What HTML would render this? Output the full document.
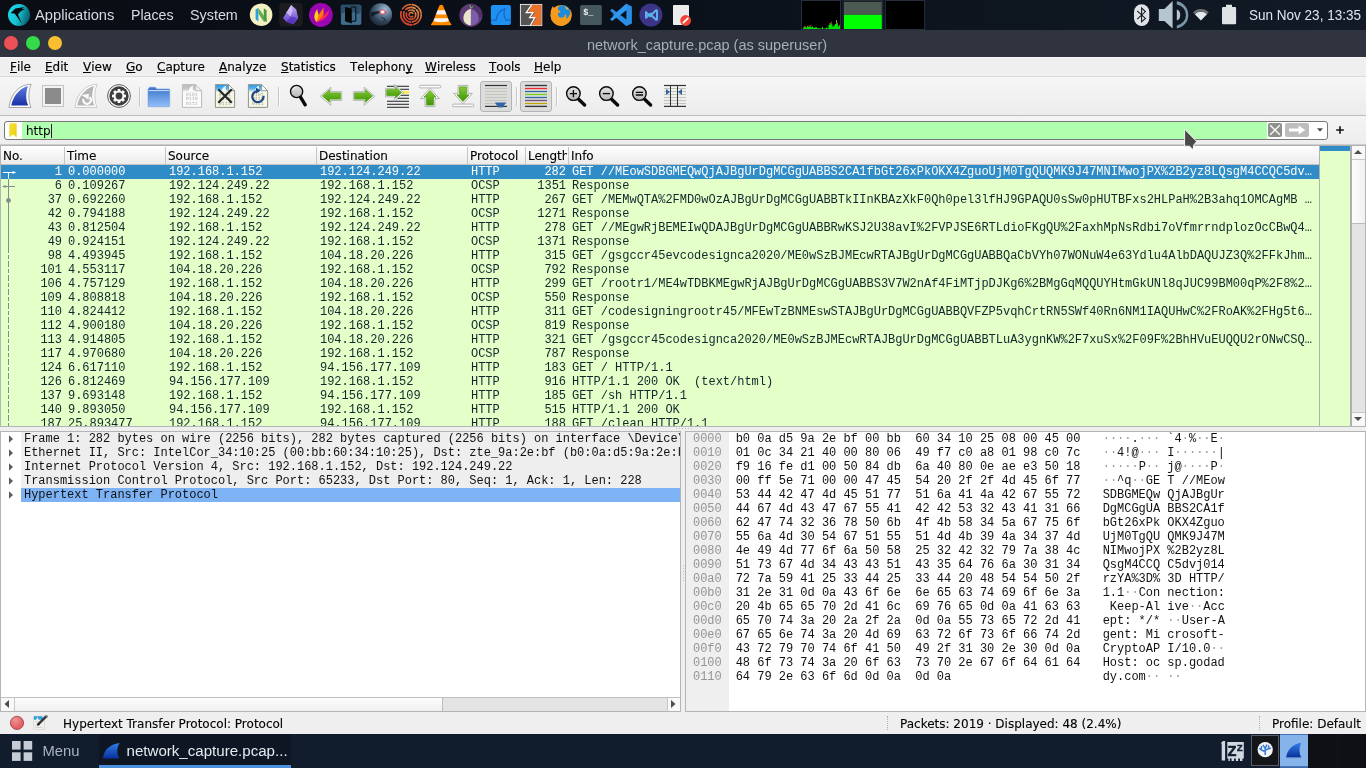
<!DOCTYPE html>
<html lang="en"><head><meta charset="utf-8"><title>network_capture.pcap (as superuser)</title>
<style>
*{box-sizing:border-box;margin:0;padding:0}
html,body{width:1366px;height:768px;overflow:hidden;background:#efefef;font-family:"DejaVu Sans","Liberation Sans",sans-serif;font-size:12px;color:#1a1a1a}
#root{position:absolute;left:0;top:0;width:1366px;height:768px;overflow:hidden;will-change:transform}
.abs{position:absolute}
svg{position:absolute;overflow:visible}
#panel{position:absolute;left:0;top:0;width:1366px;height:30px;background:linear-gradient(90deg,#0a0d14 0%,#0b111a 50%,#111a26 100%);color:#d6dbe3;font-family:"Liberation Sans",sans-serif;font-size:15.5px}
#panel .t{position:absolute;top:5px;line-height:20px;white-space:nowrap;transform-origin:0 50%;transform:scaleX(.95)}
#title{position:absolute;left:0;top:30px;width:1366px;height:27px;background:#2f343f;color:#a5aebb;font-family:"Liberation Sans",sans-serif;font-size:14.5px}
#title .tt{position:absolute;left:0;top:6px;width:1414px;text-align:center;line-height:19px;white-space:nowrap}
.dot{position:absolute;top:6px;width:14px;height:14px;border-radius:50%}
#menubar{position:absolute;left:0;top:57px;width:1366px;height:20px;background:#efefef;border-top:1px solid #f8f8f8;border-bottom:1px solid #dadada;font-size:12px;line-height:19px;color:#000;-webkit-text-stroke:0.15px #000}
#menubar span{position:absolute;top:0;white-space:nowrap;font-kerning:none}
#menubar u{text-decoration:underline;text-underline-offset:1px;text-decoration-skip-ink:none}
#toolbar{position:absolute;left:0;top:77px;width:1366px;height:39px;background:linear-gradient(#f6f6f6,#ececec);border-bottom:1px solid #bdbdbd}
.tsep{position:absolute;top:10px;width:1px;height:19px;background:#c6c6c6;box-shadow:1px 0 0 #fafafa}
.tbtn{position:absolute;top:4px;width:32px;height:31px;border:1px solid #b4b4b4;border-radius:3px;background:#dcdcdc}
#filter{position:absolute;left:0;top:116px;width:1366px;height:29px;background:linear-gradient(#f4f4f4,#ededed)}
#finput{position:absolute;left:4px;top:5px;width:1324px;height:19px;border:1px solid #777;border-radius:3px;background:#fff;overflow:hidden}
#fgreen{position:absolute;left:17px;top:0;width:1245px;height:17px;background:#afffaf;font-size:12px;line-height:17px;padding:1px 0 0 4px;color:#000}
#plist{position:absolute;left:0;top:145px;width:1366px;height:282px;border:1px solid #b4b4b4;border-top-color:#b0b0b0;background:#fff;overflow:hidden;box-shadow:0 -1px 0 #cdcdcd}
#phead{position:absolute;left:0;top:0;width:1318px;height:19px;background:linear-gradient(#ffffff,#ebebeb);border-bottom:1px solid #c9c3c0;font-size:12px;line-height:18px;color:#000;-webkit-text-stroke:0.12px #000}
#phead span{position:absolute;top:1px;height:18px;border-left:1px solid #c4c4c4;padding-left:2px;white-space:nowrap;overflow:hidden}
#prows{position:absolute;left:0;top:19px;width:1318px;height:261px;background:#e4ffc7;overflow:hidden;font-family:"Liberation Mono",monospace;font-size:12px;line-height:14px;color:#12272e}
.r{position:absolute;left:0;width:1318px;height:14px;white-space:pre;letter-spacing:-0.018px}
.r span{position:absolute;top:0;height:14px;overflow:hidden;white-space:pre}
.r.sel{background:#308cc6;color:#fff}
.c0{left:21px;width:40px;text-align:right}
.c1{left:67px;width:96px}
.c2{left:168px;width:146px}
.c3{left:319px;width:146px}
.c4{left:470px;width:54px}
.c5{left:525px;width:40px;text-align:right}
.c6{left:571px;width:745px}
#mini{position:absolute;left:1318px;top:0;width:33px;height:280px;border-left:1px solid #b0b0b0;border-right:2px solid #b0b0b0;background:#e4ffc7}
#vsb{position:absolute;left:1351px;top:0;width:13px;height:280px;background:#e4e4e4}
#dpane{position:absolute;left:0;top:431px;width:681px;height:281px;border:1px solid #b4b4b4;background:#fff;overflow:hidden;font-family:"Liberation Mono",monospace;font-size:12px;line-height:14px;color:#111}
.d{position:absolute;left:0;width:679px;height:14px;white-space:pre;letter-spacing:-0.018px}
.d span{position:absolute;left:20px;top:0;padding-left:3px;height:14px;width:659px;overflow:hidden;background:#eee}
.d.dsel span{background:#7db3f4}
.tri{left:7px;top:3px}
#hsb{position:absolute;left:0;top:265px;width:679px;height:14px;border-top:1px solid #c0c0c0;background:#e4e4e4}
#hpane{position:absolute;left:685px;top:431px;width:681px;height:281px;border:1px solid #b4b4b4;background:#fff;overflow:hidden;font-family:"Liberation Mono",monospace;font-size:12px;line-height:14px;color:#111}
#hgut{position:absolute;left:0;top:0;width:43px;height:279px;background:#efefef}
.h{position:absolute;left:0;width:678px;height:14px;white-space:pre;letter-spacing:-0.018px}
.h span{position:absolute;top:0;white-space:pre}
.ho{left:7px;color:#959595}
.hb{left:49.7px}
.ha{left:416.7px}
.ha i{font-style:normal;color:#9a9a9a}
#status{position:absolute;left:0;top:712px;width:1366px;height:22px;background:#efefef;font-size:12px;line-height:22px;color:#000;-webkit-text-stroke:0.12px #000}
#status span{position:absolute;top:1px;white-space:nowrap}
#taskbar{position:absolute;left:0;top:734px;width:1366px;height:34px;background:#111d2c;color:#dfe3ea;font-family:"Liberation Sans",sans-serif;font-size:14.5px}
#taskbar span{position:absolute;top:8px;line-height:18px;white-space:nowrap}
</style></head><body><div id="root">
<div id="panel">
<span class="t" style="left:35px">Applications</span>
<span class="t" style="left:131px;transform:scaleX(.915)">Places</span>
<span class="t" style="left:190px;transform:scaleX(.925)">System</span>
<span class="t" style="left:1249px;color:#dfe6f0;transform:scaleX(.872)">Sun Nov 23, 13:35</span>
<svg style="left:0;top:0" width="1366" height="30" viewBox="0 0 1366 30">
<defs>
<linearGradient id="pg1" x1="0" y1="0" x2="1" y2="0.3"><stop offset="0" stop-color="#1fdcea"/><stop offset="0.55" stop-color="#16c4d4"/><stop offset="1" stop-color="#086a78"/></linearGradient>
<radialGradient id="pg2" cx="0.68" cy="0.28" r="0.95"><stop offset="0" stop-color="#a4c0d8"/><stop offset="0.3" stop-color="#5f7a94"/><stop offset="0.62" stop-color="#2c3e50"/><stop offset="1" stop-color="#10171f"/></radialGradient><radialGradient id="pgeye" cx="0.5" cy="0.5" r="0.5"><stop offset="0" stop-color="#ffffff"/><stop offset="0.3" stop-color="#ffe4e8"/><stop offset="0.6" stop-color="#f06a80" stop-opacity="0.8"/><stop offset="1" stop-color="#e03050" stop-opacity="0"/></radialGradient>
<linearGradient id="pg3" x1="0" y1="1" x2="1" y2="0"><stop offset="0" stop-color="#cc382c"/><stop offset="0.55" stop-color="#d85a30"/><stop offset="1" stop-color="#e8a24e"/></linearGradient>
<linearGradient id="pg4" x1="0" y1="0" x2="0" y2="1"><stop offset="0" stop-color="#c4b0f8"/><stop offset="1" stop-color="#5a38c4"/></linearGradient>
<linearGradient id="pg5" x1="0" y1="0" x2="0" y2="1"><stop offset="0" stop-color="#2f7fe8"/><stop offset="1" stop-color="#0a2f9a"/></linearGradient>
</defs>
<!-- parrot logo -->
<circle cx="19" cy="15" r="11" fill="url(#pg1)"/>
<path d="M10.6 13.2 L15.4 8.6 L24.6 7 L21.6 8.8 L25 9 L20.4 11.4 L18 14.6 L21.8 23.4 L14.6 13.4 Z" fill="#05080c"/>
<!-- neovim -->
<circle cx="261.1" cy="14.7" r="11.3" fill="#f4f0c4"/>
<path d="M255.6 9.6 L258.4 8 L258.4 21.6 L255.6 19.2 Z" fill="#2f9fe0"/>
<path d="M258.4 8 L266.6 19.4 L266.6 21.8 L263.8 21.8 L258.4 13.4 Z" fill="#5fae52"/>
<path d="M263.8 8.2 L266.6 10.2 L266.6 21.8 L263.8 19.2 Z" fill="#4a9a3e"/>
<!-- obsidian -->
<rect x="279.2" y="2.9" width="23.6" height="23.7" rx="4" fill="#1c1c1f"/>
<path d="M291.2 5 L296.2 9.4 L298.2 18 L293.4 24.4 L286.6 22 L283 18.2 L286.4 12.4 Z" fill="url(#pg4)"/>
<path d="M291.2 5 L292.6 10.6 L290.6 16.4 L286.4 12.4 Z" fill="#d8c8fc" opacity="0.75"/>
<path d="M290.6 16.4 L296.8 17.6 L293.4 24.4 L286.6 22 Z" fill="#4c2ab4" opacity="0.6"/>
<!-- flameshot -->
<circle cx="320.9" cy="15" r="11.9" fill="#9a07b2"/>
<path d="M317 22 C312.6 18.6 314.4 13 317.4 9 C317.2 12.4 319 13.4 318.8 17 Z" fill="#ffd21a"/>
<path d="M317 22 C317.4 17 319.4 12.6 323.8 7.6 C323 11.4 324.4 13 323 16.4 C321 19.4 319 21 317 22 Z" fill="#ff7a0a"/>
<path d="M317 22 C320.6 18.4 325 14.6 329.2 10 C328.6 15.6 324.6 20.6 317 22 Z" fill="#ff2060"/>
<!-- door -->
<rect x="340.3" y="4.2" width="21.6" height="21.2" rx="2.4" fill="#3f6c8c" stroke="#05080c" stroke-width="0.9"/>
<path d="M340.8 6 Q340.8 4.7 342.4 4.7 L359.8 4.7 Q361.4 4.7 361.4 6 L361.4 11.6 L358 14.4 L354 12 L349 14.6 L344.4 12 L340.8 14 Z" fill="#2a4d68"/>
<path d="M345 7 L351.8 8.6 L351.8 23.4 L345 21.2 Z" fill="#040608"/>
<path d="M350.6 7 L355.8 7 L355.8 21.2 L352 21.2" fill="none" stroke="#040608" stroke-width="1"/>
<!-- robot sphere -->
<circle cx="380.800" cy="14.500" r="11.300" fill="url(#pg2)"/>
<path d="M371 12.600 C375 11 381 10.600 386 11.400 L386 13 C381 12.400 375.600 13.600 372 17 C370.800 15.600 370.600 14 371 12.600 Z" fill="#0e141c" opacity="0.8"/>
<ellipse cx="382.600" cy="12" rx="4.400" ry="3.200" fill="url(#pgeye)"/>
<path d="M381.200 17.400 L385.200 19 L383.400 22.400 M386 21 L387 21.200" fill="none" stroke="#141c26" stroke-width="0.900" opacity="0.85"/>
<!-- fingerprint rings -->
<g fill="none" stroke="url(#pg3)" stroke-linecap="round">
<circle cx="411" cy="14.7" r="10.2" stroke-width="1.7" stroke-dasharray="13 2 20 3 9 2"/>
<circle cx="411" cy="14.7" r="7.4" stroke-width="1.7" stroke-dasharray="10 2 14 3"/>
<circle cx="411" cy="14.7" r="4.7" stroke-width="1.7" stroke-dasharray="16 3 6 2"/>
<path d="M412.8 13.2 A2.2 2.2 0 1 0 412.8 16.2" stroke-width="1.5"/>
</g>
<!-- vlc -->
<path d="M439.4 5.6 Q441.2 4 443 5.6 L449.2 21 L451.4 24.4 Q451.6 25.2 450.6 25.2 L431.8 25.2 Q430.8 25.2 431 24.4 L433.2 21 Z" fill="#ff8a00"/>
<path d="M437.6 10.2 L444.8 10.2 L446.4 14.4 L436 14.4 Z" fill="#f4f4f4"/>
<path d="M434.6 18.2 L447.8 18.2 L448.8 21 C445 22.6 437.4 22.6 433.6 21 Z" fill="#f4f4f4"/>
<!-- tor -->
<circle cx="470.9" cy="15.2" r="11.5" fill="#5d3a78"/>
<path d="M470.9 3.7 A11.5 11.5 0 0 1 482.4 15.2 L478 21 L471 9 Z" fill="#4e2d66" opacity="0.7"/>
<path d="M470.9 8.4 C476.4 10.6 478.8 14 478.8 18 C478.8 22.4 475.6 25 470.9 25.4 Z" fill="#7e5da8"/>
<path d="M470.9 8.4 C465.4 10.6 463.4 14 463.4 18 C463.4 22.4 466.4 25 470.9 25.4 Z" fill="#e9e6cc"/>
<path d="M470.4 8.6 C470.2 6.6 469.6 5.6 468.8 4.6 C470.6 5 471.4 6.6 471.2 8.6 Z" fill="#6fbf4a"/>
<path d="M471 8.2 C471.4 6.8 472.2 6.2 473.4 6 C473 7.2 472.2 8 471 8.2 Z" fill="#6fbf4a"/>
<!-- wireshark -->
<rect x="490.9" y="5" width="20" height="20" rx="2" fill="#1e90f2"/>
<path d="M491 20.2 H496.2 C496.6 14.4 499.6 10.2 505 8.8 C503.4 12.6 503.8 16.6 506 20.2 H510.8" fill="none" stroke="#1668c4" stroke-width="1.2"/>
<!-- burp -->
<rect x="520.4" y="4.4" width="21.4" height="21.2" fill="#555555" stroke="#f2f2f2" stroke-width="0.9"/>
<path d="M531.6 4.8 H541.4 V25.2 H531.4 L536.4 17.6 H531 L535 12.6 H528.4 Z" fill="#e8722a"/>
<path d="M531.6 4.8 L526.2 12.6 L533 12.6 L529.6 17.6 L534.8 17.6 L530.4 25.2" fill="none" stroke="#ffffff" stroke-width="1.2"/>
<!-- firefox -->
<circle cx="561.100" cy="15.400" r="10.500" fill="#f59a1c"/>
<circle cx="563" cy="12.600" r="7.300" fill="#1c8bdc"/>
<path d="M550.700 12 C551 9 552 7.400 553.200 6 C553.400 7.400 554 8.200 555 8.600 C555.800 7 557.400 6.200 559 6.200 C557.800 7.400 557.600 8.800 558.200 10 C559.400 10.400 560.400 11.400 560.600 12.600 C559 12.400 558 13 557.800 14.200 C558 16.600 560 18 562.200 17.600 C564.400 17.200 565.400 15.200 564.600 13.400 C566.400 14.400 567 17 565.800 19 C568 18.400 569.600 16.400 570 13.800 C570.800 11.800 570.600 10 569.800 8.400 C571.600 10.400 572 13.600 571.400 16.600 C570.200 22.200 565.800 26 560.800 25.900 C555 25.700 550.400 20.800 550.600 14.800 Z" fill="#f59a1c"/>
<path d="M564 6 C566.400 6.600 568.200 8 569 10 C568 9.400 567 9.200 566.200 9.400 C566 8 565.200 6.800 564 6 Z" fill="#f8b030"/>
<!-- terminal -->
<rect x="580.1" y="5" width="21.7" height="20" rx="1.6" fill="#47575f"/>
<text x="583.2" y="14.600" font-family="Liberation Mono,monospace" font-weight="bold" font-size="8.5" fill="#f2f4f5">$_</text>
<!-- vscode -->
<path d="M626.400 3.800 L631.900 6.400 L631.900 23.400 L626.400 25.900 L612.800 14.900 Z" fill="#2a8ee6"/>
<path d="M626.400 3.800 L626.400 25.900 L610.200 10.400 L612.400 8.800 L626.400 19.400 Z" fill="#3aa2f6" opacity="0.001"/>
<path d="M610 10.600 L612.200 8.800 L626.400 20.200 L626.400 25.900 Z" fill="#2a8ee6"/>
<path d="M610 19.200 L612.200 21 L626.400 9.600 L626.400 3.800 Z" fill="#2f98f0"/>
<path d="M626.400 10.200 L620.400 14.900 L626.400 19.600 Z" fill="#0b111a"/>
<!-- vs purple -->
<circle cx="650.900" cy="15" r="11.500" fill="#3b3487"/>
<path d="M656 9 L658 10 L658 20 L656 21 L649.400 15 Z M656 11.800 L652.600 15 L656 18.200 Z" fill="#5cb2ea" fill-rule="evenodd"/>
<path d="M645 11.600 L646.200 11 L651.800 16.400 L650.400 17.600 L647 14.600 L647 15.400 L650.400 12.400 L651.800 13.600 L646.200 19 L645 18.400 Z" fill="#5cb2ea"/>
<!-- doc with badge -->
<rect x="673" y="5" width="16" height="20" rx="0.800" fill="#ebebeb"/>
<circle cx="685.600" cy="20.500" r="5.400" fill="#f1453a"/>
<path d="M683.400 22.600 L687.800 18.400" stroke="#fff" stroke-width="1.700" stroke-linecap="round"/>
<!-- system monitor graphs -->
<rect x="801.500" y="0.500" width="39" height="29" fill="#000" stroke="#262d3c" stroke-width="1"/>
<path d="M803 29 V27.400 H804 V26.600 H805.500 V27.600 H807 V26 H808 V27 H809.500 V25.600 H810.500 V27.200 H812 V26.400 H813 V27.800 H815 V27.200 H817 V28.200 H820 V28.600 H822 V26.800 H823 V28.400 H826 V27.400 H827 V28.200 H828.500 V25 H829.500 V23.600 H830.500 V22.400 H831.500 V24.400 H832.500 V26.800 H833.500 V25.600 H835 V24 H836 V20.400 H837 V23.200 H838 V26.400 H839 V25 H840 V29 Z" fill="#00e400"/>
<path d="M804 26.600 H805.500 M808 26 H808.800 M810.500 25.600 H811.400 M829.500 23.600 H830.500 M831 22.400 H831.800 M836 22.600 H837.400 M838.600 25.200 H839.600" stroke="#ff2020" stroke-width="1.100"/>
<path d="M836.500 20.400 V22" stroke="#b8b8c8" stroke-width="0.900"/>
<rect x="843.200" y="0.500" width="39.400" height="29" fill="#000" stroke="#262d3c" stroke-width="1"/>
<rect x="844" y="1.600" width="37.800" height="13.200" fill="#4b5a52"/>
<rect x="844" y="14.800" width="37.800" height="14.200" fill="#00ff00"/>
<rect x="885.400" y="0.500" width="39.200" height="29" fill="#000" stroke="#262d3c" stroke-width="1"/>
<!-- bluetooth -->
<rect x="1134" y="4.300" width="15.300" height="21.600" rx="7.600" fill="#dfe3e6"/>
<path d="M1137.200 10.800 L1145.400 18.400 L1141.600 21.800 L1141.600 8 L1145.400 11.600 L1137.200 19.200" fill="none" stroke="#161b24" stroke-width="1.100"/>
<!-- speaker -->
<path d="M1158.800 9 H1164.400 L1172.600 1 V28.600 L1164.400 21 H1158.800 Z" fill="#b6c6ce"/>
<path d="M1176.800 9.600 A4.200 5.600 0 0 1 1176.800 20.600 Z" fill="#b6c6ce"/>
<path d="M1176.800 1.200 A13.900 13.900 0 0 1 1176.800 28.600 L1176.800 25.400 A10.600 10.600 0 0 0 1176.800 4.400 Z" fill="#7896a6"/>
<!-- wifi -->
<path d="M1193 12.400 A11 11 0 0 1 1208.800 12.400 L1207.200 14 A9 9 0 0 0 1194.600 14 Z" fill="#6d7178"/>
<path d="M1194.800 14.200 A8.800 8.800 0 0 1 1207 14.200 L1200.900 20.600 Z" fill="#e6e9ec"/>
<!-- battery -->
<path d="M1226 4.800 H1232 V6.900 H1235 Q1236.100 6.900 1236.100 8 V23.200 Q1236.100 24.300 1235 24.300 H1223.100 Q1222 24.300 1222 23.200 V8 Q1222 6.900 1223.100 6.900 H1226 Z" fill="#dfe3e6"/>
</svg>

</div>
<div id="title"><div class="tt">network_capture.pcap (as superuser)</div>
<div class="dot" style="left:4px;background:#ee5058"></div>
<div class="dot" style="left:26px;background:#35dc4a"></div>
<div class="dot" style="left:48px;background:#f9be2f"></div>
</div>
<div id="menubar">
<span style="left:10px"><u>F</u>ile</span>
<span style="left:45px"><u>E</u>dit</span>
<span style="left:83px"><u>V</u>iew</span>
<span style="left:126px"><u>G</u>o</span>
<span style="left:157px"><u>C</u>apture</span>
<span style="left:219px"><u>A</u>nalyze</span>
<span style="left:281px"><u>S</u>tatistics</span>
<span style="left:350px">Telephon<u>y</u></span>
<span style="left:425px"><u>W</u>ireless</span>
<span style="left:489px"><u>T</u>ools</span>
<span style="left:534px"><u>H</u>elp</span>
</div>
<div id="toolbar">
<div class="tsep" style="left:139px"></div>
<div class="tsep" style="left:278px"></div>
<div class="tsep" style="left:516px"></div>
<div class="tsep" style="left:556px"></div>
<div class="tbtn" style="left:480px"></div>
<div class="tbtn" style="left:520px"></div>
<svg width="0" height="0"><defs>
<linearGradient id="gfin" x1="0" y1="0" x2="0" y2="1"><stop offset="0" stop-color="#5b7de0"/><stop offset="1" stop-color="#1b2fa4"/></linearGradient>
<linearGradient id="gfold" x1="0" y1="0" x2="0" y2="1"><stop offset="0" stop-color="#3873c6"/><stop offset="1" stop-color="#93bffa"/></linearGradient>
<linearGradient id="ggrn" x1="0" y1="0" x2="0" y2="1"><stop offset="0" stop-color="#86cf38"/><stop offset="0.5" stop-color="#5fae1c"/><stop offset="1" stop-color="#43920a"/></linearGradient>
<linearGradient id="ggrnh" x1="0" y1="0" x2="1" y2="0"><stop offset="0" stop-color="#4d9d14"/><stop offset="1" stop-color="#79bd36"/></linearGradient>
<linearGradient id="glens" x1="0" y1="0" x2="0" y2="1"><stop offset="0" stop-color="#e2e2e2"/><stop offset="1" stop-color="#b9b9b9"/></linearGradient>
<linearGradient id="ghdr" x1="0" y1="0" x2="1" y2="0"><stop offset="0" stop-color="#5db4f0"/><stop offset="1" stop-color="#1f8fe0"/></linearGradient>
<linearGradient id="gband" x1="0" y1="0" x2="0" y2="1"><stop offset="0" stop-color="#2f9ae6"/><stop offset="0.55" stop-color="#5db4ee"/><stop offset="1" stop-color="#f4f6ec"/></linearGradient><linearGradient id="gbandg" x1="0" y1="0" x2="0" y2="1"><stop offset="0" stop-color="#bcbcbc"/><stop offset="0.6" stop-color="#cacaca"/><stop offset="1" stop-color="#fbfbfb"/></linearGradient></defs></svg>
<!-- 1 start fin -->
<svg style="left:8px;top:7px" width="24" height="24" viewBox="0 0 24 24"><path d="M1 23.500 C1.800 14 8 2.500 19.500 0.500 L23.100 0.300 C20.200 7.500 20.200 16 22.900 23.500 Z" fill="#fdfdfd" stroke="#909090" stroke-width="0.800" stroke-linejoin="round"/><path d="M3.300 21.600 C4.600 13.500 10.500 4.600 20 2 C17.600 8.400 17.600 15.600 20.200 21.600 Z" fill="url(#gfin)"/></svg>
<!-- 2 stop -->
<svg style="left:41px;top:7px" width="24" height="24" viewBox="0 0 24 24"><rect x="1.5" y="1.5" width="21" height="21" fill="#f3f3f3" stroke="#c3c3c3" stroke-width="1"/><rect x="4" y="4" width="16" height="16" fill="#8b8b8b"/></svg>
<!-- 3 restart fin (disabled) -->
<svg style="left:74px;top:7px" width="24" height="24" viewBox="0 0 24 24"><path d="M1 23.500 C1.800 14 8 2.500 19.500 0.500 L23.100 0.300 C20.200 7.500 20.200 16 22.900 23.500 Z" fill="#fafafa" stroke="#c2c2c2" stroke-width="0.800" stroke-linejoin="round"/><path d="M3.300 21.600 C4.600 13.500 10.500 4.600 20 2 C17.600 8.400 17.600 15.600 20.200 21.600 Z" fill="#b4b4b4"/><path d="M15.54 13.09 A3.8 3.8 0 1 1 9.43 15.02" fill="none" stroke="#fafafa" stroke-width="2.200"/><path d="M7.400 10.900 L14.900 9.800 L14.500 15.800 Z" fill="#fafafa"/></svg>
<!-- 4 options gear -->
<svg style="left:107px;top:7px" width="24" height="24" viewBox="0 0 24 24"><circle cx="12" cy="12" r="11.400" fill="#fafafa" stroke="#4a4a4a" stroke-width="0.900"/><circle cx="12" cy="12" r="9.700" fill="#3d3d3d"/><g fill="#fafafa"><circle cx="12" cy="12" r="5.300"/><rect x="10.500" y="5" width="3" height="14" rx="0.700" transform="rotate(0 12 12)"/><rect x="10.500" y="5" width="3" height="14" rx="0.700" transform="rotate(45 12 12)"/><rect x="10.500" y="5" width="3" height="14" rx="0.700" transform="rotate(90 12 12)"/><rect x="10.500" y="5" width="3" height="14" rx="0.700" transform="rotate(135 12 12)"/></g><circle cx="12" cy="12" r="3.400" fill="#3d3d3d"/></svg>
<!-- 5 open folder -->
<svg style="left:147px;top:7px" width="24" height="24" viewBox="0 0 24 24"><path d="M1 5.200 L2.600 3.200 L8.400 3.200 L9.600 5 L22 5 Q22.700 5 22.700 5.600 L22.700 22 Q22.700 22.700 22 22.700 L1.800 22.700 Q1 22.700 1 22 Z" fill="url(#gfold)" stroke="#6fa0e8" stroke-width="0.600"/><rect x="1.600" y="6.200" width="20.600" height="0.900" fill="#dfeaf9"/></svg>
<!-- 6 save (disabled) -->
<svg style="left:180px;top:7px" width="24" height="24" viewBox="0 0 24 24"><path d="M2.400 0.600 L15.600 0.600 L21.600 6.600 L21.600 23.400 L2.400 23.400 Z" fill="#fbfbfb" stroke="#b3b3b3" stroke-width="0.900"/><path d="M2.900 1.100 L15.400 1.100 L21.100 6.800 L21.100 8 L2.900 8 Z" fill="url(#gbandg)"/><path d="M8.600 7.400 C8.800 4.800 10.400 2.600 13.400 1.500 C12.300 3.400 12.400 5.400 13.800 7.400 Z" fill="#fbfbfb"/><path d="M15.600 0.600 L15.600 6.600 L21.600 6.600 Z" fill="#efefef" stroke="#b3b3b3" stroke-width="0.700" stroke-linejoin="round"/><g text-rendering="geometricPrecision" font-family="Liberation Mono,monospace" font-size="5" fill="#b0b0b0"><text x="5.700" y="12">0101</text><text x="5.700" y="16.300">0110</text><text x="5.700" y="21">0111</text></g></svg>
<!-- 7 close file -->
<svg style="left:213px;top:7px" width="24" height="24" viewBox="0 0 24 24"><path d="M2.400 0.600 L15.600 0.600 L21.600 6.600 L21.600 23.400 L2.400 23.400 Z" fill="#f7f7e6" stroke="#85857c" stroke-width="0.900"/><path d="M2.900 1.100 L15.400 1.100 L21.100 6.800 L21.100 8 L2.900 8 Z" fill="url(#gband)"/><path d="M8.600 7.400 C8.800 4.800 10.400 2.600 13.400 1.500 C12.300 3.400 12.400 5.400 13.800 7.400 Z" fill="#fbfcf6"/><path d="M15.600 0.600 L15.600 6.600 L21.600 6.600 Z" fill="#fcfcf4" stroke="#85857c" stroke-width="0.700" stroke-linejoin="round"/><g text-rendering="geometricPrecision" font-family="Liberation Mono,monospace" font-size="5" fill="#a4a492"><text x="5.700" y="12">0101</text><text x="5.700" y="16.300">0110</text><text x="5.700" y="21">0111</text></g><path d="M5.300 5.300 L18.800 18.700 M18.800 5.300 L5.300 18.700" stroke="#22262a" stroke-width="2.200"/></svg>
<!-- 8 reload -->
<svg style="left:246px;top:7px" width="24" height="24" viewBox="0 0 24 24"><path d="M2.400 0.600 L15.600 0.600 L21.600 6.600 L21.600 23.400 L2.400 23.400 Z" fill="#f7f7e6" stroke="#85857c" stroke-width="0.900"/><path d="M2.900 1.100 L15.400 1.100 L21.100 6.800 L21.100 8 L2.900 8 Z" fill="url(#gband)"/><path d="M8.600 7.400 C8.800 4.800 10.400 2.600 13.400 1.500 C12.300 3.400 12.400 5.400 13.800 7.400 Z" fill="#fbfcf6"/><path d="M15.600 0.600 L15.600 6.600 L21.600 6.600 Z" fill="#fcfcf4" stroke="#85857c" stroke-width="0.700" stroke-linejoin="round"/><g text-rendering="geometricPrecision" font-family="Liberation Mono,monospace" font-size="5" fill="#a4a492"><text x="5.700" y="12">0101</text><text x="5.700" y="16.300">0110</text><text x="5.700" y="21">0111</text></g><path d="M10.93 7.09 A5.6 5.6 0 1 0 17.45 11.82" fill="none" stroke="#1d4486" stroke-width="2.200"/><path d="M14.600 6.500 L9.800 3.600 L10.300 9.600 Z" fill="#1d4486"/></svg>
<!-- 9 find -->
<svg style="left:286px;top:7px" width="24" height="24" viewBox="0 0 24 24"><path d="M14.2 12.6 L19.2 20.8" stroke="#0a0a0a" stroke-width="3.4" stroke-linecap="round"/><circle cx="10.6" cy="7.5" r="6.1" fill="url(#glens)" stroke="#0a0a0a" stroke-width="1.4"/><path d="M6.6 6.2 A4.4 4.4 0 0 1 10 3.2" fill="none" stroke="#f7f7f7" stroke-width="0.9"/></svg>
<!-- 10 back -->
<svg style="left:319px;top:7px" width="24" height="24" viewBox="0 0 24 24"><path d="M1.400 12 L11.800 3.200 L11.800 7.600 L22.600 7.600 L22.600 16.400 L11.800 16.400 L11.800 20.800 Z" fill="#fdfdfd" stroke="#a5a5a5" stroke-width="0.800" stroke-linejoin="round" stroke-linecap="round"/><path d="M3.400 12 L10.600 5.800 L10.600 8.900 L21.300 8.900 L21.300 15.100 L10.600 15.100 L10.600 18.200 Z" fill="url(#ggrn)" stroke="#58a51e" stroke-width="0.9" stroke-linejoin="round"/></svg>
<!-- 11 forward -->
<svg style="left:352px;top:7px" width="24" height="24" viewBox="0 0 24 24"><path d="M22.600 12 L12.200 3.200 L12.200 7.600 L1.400 7.600 L1.400 16.400 L12.200 16.400 L12.200 20.800 Z" fill="#fdfdfd" stroke="#a5a5a5" stroke-width="0.800" stroke-linejoin="round" stroke-linecap="round"/><path d="M20.600 12 L13.400 5.800 L13.400 8.900 L2.700 8.900 L2.700 15.100 L13.400 15.100 L13.400 18.200 Z" fill="url(#ggrn)" stroke="#58a51e" stroke-width="0.9" stroke-linejoin="round"/></svg>
<!-- 12 goto -->
<svg style="left:385px;top:7px" width="24" height="24" viewBox="0 0 24 24"><g stroke="#2e3436" stroke-width="1.100"><path d="M2 2.300 H24"/><path d="M15 11.300 H24"/><path d="M12 14.300 H24"/><path d="M2 17.300 H24"/><path d="M2 20.300 H24"/><path d="M2 23.300 H24"/><path d="M15 5.300 H24"/></g><rect x="17.500" y="7" width="6.500" height="2.800" fill="#fce94f"/><path d="M18.400 8.600 L9.400 0.400 L9.400 4.400 L0.500 4.400 L0.500 12.800 L9.400 12.800 L9.400 16.800 Z" fill="#fdfdfd" stroke="#a5a5a5" stroke-width="0.800" stroke-linejoin="round" stroke-linecap="round"/><path d="M16.500 8.600 L10.600 3.200 L10.600 5.700 L1.800 5.700 L1.800 11.500 L10.600 11.500 L10.600 14 Z" fill="url(#ggrn)" stroke="#58a51e" stroke-width="0.9" stroke-linejoin="round"/></svg>
<!-- 13 first -->
<svg style="left:418px;top:7px" width="24" height="24" viewBox="0 0 24 24"><rect x="1.4" y="1.3" width="21.4" height="2.6" rx="1.3" fill="#fdfdfd" stroke="#9f9f9f" stroke-width="0.8"/><path d="M12 4.2 L21.4 14.6 L16.9 14.6 L16.9 22.6 L7.1 22.6 L7.1 14.6 L2.6 14.6 Z" fill="#fdfdfd" stroke="#9f9f9f" stroke-width="0.8" stroke-linejoin="round"/><path d="M12 6.6 L18 13.1 L15.4 13.1 L15.4 21.1 L8.6 21.1 L8.6 13.1 L6 13.1 Z" fill="url(#ggrn)" stroke="#58a51e" stroke-width="0.9" stroke-linejoin="round"/></svg>
<!-- 14 last -->
<svg style="left:451px;top:7px" width="24" height="24" viewBox="0 0 24 24"><rect x="1.4" y="20.1" width="21.4" height="2.6" rx="1.3" fill="#fdfdfd" stroke="#9f9f9f" stroke-width="0.8"/><path d="M12 19.8 L21.4 9.4 L16.9 9.4 L16.9 1.4 L7.1 1.4 L7.1 9.4 L2.6 9.4 Z" fill="#fdfdfd" stroke="#9f9f9f" stroke-width="0.8" stroke-linejoin="round"/><path d="M12 17.4 L18 10.9 L15.4 10.9 L15.4 2.9 L8.6 2.9 L8.6 10.9 L6 10.9 Z" fill="url(#ggrn)" stroke="#58a51e" stroke-width="0.9" stroke-linejoin="round"/></svg>
<!-- 15 autoscroll -->
<svg style="left:484px;top:7px" width="24" height="24" viewBox="0 0 24 24"><g stroke="#c3c7b9" stroke-width="1.1"><path d="M1 4.5 H23"/><path d="M1 7.5 H23"/><path d="M1 10.5 H23"/><path d="M1 13.5 H23"/><path d="M1 16.5 H23"/><path d="M1 19.5 H23"/></g><g stroke="#2e3436" stroke-width="1.2"><path d="M1 1.5 H23"/><path d="M1 22.4 H23"/></g><path d="M10.8 18.6 L22.2 18.6 L18.6 23.4 L14.4 23.4 Z" fill="#3465a4"/></svg>
<!-- 16 colorize -->
<svg style="left:524px;top:7px" width="24" height="24" viewBox="0 0 24 24"><g stroke-width="1.3"><path d="M1 1.5 H23" stroke="#2e3436"/><path d="M1 4.5 H23" stroke="#ef2929"/><path d="M1 7.5 H23" stroke="#3465a4"/><path d="M1 10.5 H23" stroke="#73d216"/><path d="M1 13.5 H23" stroke="#3465a4"/><path d="M1 16.5 H23" stroke="#75507b"/><path d="M1 19.5 H23" stroke="#c4a000"/><path d="M1 22.4 H23" stroke="#2e3436"/></g></svg>
<!-- 17 zoom in -->
<svg style="left:564px;top:7px" width="24" height="24" viewBox="0 0 24 24"><path d="M14.6 15.2 L20.6 21" stroke="#0a0a0a" stroke-width="3.4" stroke-linecap="round"/><circle cx="9.4" cy="9.6" r="6.8" fill="url(#glens)" stroke="#0a0a0a" stroke-width="1.4"/><path d="M5.8 9.6 H13 M9.4 6 V13.2" stroke="#0a0a0a" stroke-width="1.3"/></svg>
<!-- 18 zoom out -->
<svg style="left:597px;top:7px" width="24" height="24" viewBox="0 0 24 24"><path d="M14.6 15.2 L20.6 21" stroke="#0a0a0a" stroke-width="3.4" stroke-linecap="round"/><circle cx="9.4" cy="9.6" r="6.8" fill="url(#glens)" stroke="#0a0a0a" stroke-width="1.4"/><path d="M5.8 9.6 H13" stroke="#0a0a0a" stroke-width="1.3"/></svg>
<!-- 19 zoom 1:1 -->
<svg style="left:630px;top:7px" width="24" height="24" viewBox="0 0 24 24"><path d="M14.6 15.2 L20.6 21" stroke="#0a0a0a" stroke-width="3.4" stroke-linecap="round"/><circle cx="9.4" cy="9.6" r="6.8" fill="url(#glens)" stroke="#0a0a0a" stroke-width="1.4"/><path d="M5.8 8.3 H13 M5.8 11 H13" stroke="#0a0a0a" stroke-width="1.3"/></svg>
<!-- 20 resize columns -->
<svg style="left:663px;top:7px" width="24" height="24" viewBox="0 0 24 24"><g stroke="#c3c7b9" stroke-width="1.1"><path d="M1 4.5 H23"/><path d="M1 7.5 H23"/><path d="M1 10.5 H23"/><path d="M1 13.5 H23"/><path d="M1 16.500 H23"/><path d="M1 19.500 H23"/></g><g stroke="#2e3436" stroke-width="1.200"><path d="M1 1.500 H23"/><path d="M1 22.400 H23"/><path d="M7.500 1.500 V22.400" stroke-width="1"/><path d="M14.500 1.500 V22.400" stroke-width="1"/></g><path d="M3 4.800 L7 7.900 L3 11 Z" fill="#3465a4"/><path d="M19 4.800 L15 7.900 L19 11 Z" fill="#3465a4"/></svg>

</div>
<div id="filter">
<div id="finput"><div id="fgreen">http</div>
<div class="abs" style="left:46px;top:2px;width:1px;height:14px;background:#401040"></div>
<svg style="left:4px;top:1px" width="8.300" height="15" viewBox="0 0 9 15" preserveAspectRatio="none"><defs><linearGradient id="gbk" x1="0" y1="0" x2="1" y2="1"><stop offset="0" stop-color="#f3e04a"/><stop offset="1" stop-color="#ecd000"/></linearGradient></defs><path d="M0.3 0.3 H8.3 V14.4 L4.3 11.2 L0.3 14.4 Z" fill="url(#gbk)"/></svg>
<div class="abs" style="left:1263px;top:1px;width:14px;height:14px;border-radius:2px;background:#8e908b"></div>
<svg style="left:1263px;top:1px" width="14" height="14" viewBox="0 0 14 14"><path d="M2.2 2.2 L11.8 11.8 M11.8 2.2 L2.2 11.8" stroke="#fff" stroke-width="1.3"/></svg>
<div class="abs" style="left:1280px;top:1px;width:24px;height:14px;border-radius:2px;background:#bdbdbd"></div>
<svg style="left:1280px;top:1px" width="24" height="14" viewBox="0 0 24 14"><path d="M4 5.4 H13.6 V2.6 L20.2 7 L13.6 11.4 V8.6 H4 Z" fill="#fff"/></svg>
<svg style="left:1312px;top:6px" width="6" height="4" viewBox="0 0 6 4"><path d="M0 0.2 H6 L3 3.8 Z" fill="#505050"/></svg>

</div>
<svg style="left:1336px;top:10px" width="8" height="8" viewBox="0 0 8 8"><path d="M4 0.2 V7.8 M0.2 4 H7.8" stroke="#111" stroke-width="1.6"/></svg>

</div>
<div id="plist">
<div id="phead">
<span style="left:-1px;width:65px">No.</span>
<span style="left:63px;width:101px">Time</span>
<span style="left:164px;width:151px">Source</span>
<span style="left:315px;width:151px">Destination</span>
<span style="left:466px;width:58px">Protocol</span>
<span style="left:524px;width:41.5px">Length</span>
<span style="left:567px;width:751px">Info</span>
</div>
<div id="prows">
<div class="r sel" style="top:0px"><span class="c0">1</span><span class="c1">0.000000</span><span class="c2">192.168.1.152</span><span class="c3">192.124.249.22</span><span class="c4">HTTP</span><span class="c5">282</span><span class="c6">GET //MEowSDBGMEQwQjAJBgUrDgMCGgUABBS2CA1fbGt26xPkOKX4ZguoUjM0TgQUQMK9J47MNIMwojPX%2B2yz8LQsgM4CCQC5dv…</span></div>
<div class="r" style="top:14px"><span class="c0">6</span><span class="c1">0.109267</span><span class="c2">192.124.249.22</span><span class="c3">192.168.1.152</span><span class="c4">OCSP</span><span class="c5">1351</span><span class="c6">Response</span></div>
<div class="r" style="top:28px"><span class="c0">37</span><span class="c1">0.692260</span><span class="c2">192.168.1.152</span><span class="c3">192.124.249.22</span><span class="c4">HTTP</span><span class="c5">267</span><span class="c6">GET /MEMwQTA%2FMD0wOzAJBgUrDgMCGgUABBTkIInKBAzXkF0Qh0pel3lfHJ9GPAQU0sSw0pHUTBFxs2HLPaH%2B3ahq1OMCAgMB …</span></div>
<div class="r" style="top:42px"><span class="c0">42</span><span class="c1">0.794188</span><span class="c2">192.124.249.22</span><span class="c3">192.168.1.152</span><span class="c4">OCSP</span><span class="c5">1271</span><span class="c6">Response</span></div>
<div class="r" style="top:56px"><span class="c0">43</span><span class="c1">0.812504</span><span class="c2">192.168.1.152</span><span class="c3">192.124.249.22</span><span class="c4">HTTP</span><span class="c5">278</span><span class="c6">GET //MEgwRjBEMEIwQDAJBgUrDgMCGgUABBRwKSJ2U38avI%2FVPJSE6RTLdioFKgQU%2FaxhMpNsRdbi7oVfmrrndplozOcCBwQ4…</span></div>
<div class="r" style="top:70px"><span class="c0">49</span><span class="c1">0.924151</span><span class="c2">192.124.249.22</span><span class="c3">192.168.1.152</span><span class="c4">OCSP</span><span class="c5">1371</span><span class="c6">Response</span></div>
<div class="r" style="top:84px"><span class="c0">98</span><span class="c1">4.493945</span><span class="c2">192.168.1.152</span><span class="c3">104.18.20.226</span><span class="c4">HTTP</span><span class="c5">315</span><span class="c6">GET /gsgccr45evcodesignca2020/ME0wSzBJMEcwRTAJBgUrDgMCGgUABBQaCbVYh07WONuW4e63Ydlu4AlbDAQUJZ3Q%2FFkJhm…</span></div>
<div class="r" style="top:98px"><span class="c0">101</span><span class="c1">4.553117</span><span class="c2">104.18.20.226</span><span class="c3">192.168.1.152</span><span class="c4">OCSP</span><span class="c5">792</span><span class="c6">Response</span></div>
<div class="r" style="top:112px"><span class="c0">106</span><span class="c1">4.757129</span><span class="c2">192.168.1.152</span><span class="c3">104.18.20.226</span><span class="c4">HTTP</span><span class="c5">299</span><span class="c6">GET /rootr1/ME4wTDBKMEgwRjAJBgUrDgMCGgUABBS3V7W2nAf4FiMTjpDJKg6%2BMgGqMQQUYHtmGkUNl8qJUC99BM00qP%2F8%2…</span></div>
<div class="r" style="top:126px"><span class="c0">109</span><span class="c1">4.808818</span><span class="c2">104.18.20.226</span><span class="c3">192.168.1.152</span><span class="c4">OCSP</span><span class="c5">550</span><span class="c6">Response</span></div>
<div class="r" style="top:140px"><span class="c0">110</span><span class="c1">4.824412</span><span class="c2">192.168.1.152</span><span class="c3">104.18.20.226</span><span class="c4">HTTP</span><span class="c5">311</span><span class="c6">GET /codesigningrootr45/MFEwTzBNMEswSTAJBgUrDgMCGgUABBQVFZP5vqhCrtRN5SWf40Rn6NM1IAQUHwC%2FRoAK%2FHg5t6…</span></div>
<div class="r" style="top:154px"><span class="c0">112</span><span class="c1">4.900180</span><span class="c2">104.18.20.226</span><span class="c3">192.168.1.152</span><span class="c4">OCSP</span><span class="c5">819</span><span class="c6">Response</span></div>
<div class="r" style="top:168px"><span class="c0">113</span><span class="c1">4.914805</span><span class="c2">192.168.1.152</span><span class="c3">104.18.20.226</span><span class="c4">HTTP</span><span class="c5">321</span><span class="c6">GET /gsgccr45codesignca2020/ME0wSzBJMEcwRTAJBgUrDgMCGgUABBTLuA3ygnKW%2F7xuSx%2F09F%2BhHVuEUQQU2rONwCSQ…</span></div>
<div class="r" style="top:182px"><span class="c0">117</span><span class="c1">4.970680</span><span class="c2">104.18.20.226</span><span class="c3">192.168.1.152</span><span class="c4">OCSP</span><span class="c5">787</span><span class="c6">Response</span></div>
<div class="r" style="top:196px"><span class="c0">124</span><span class="c1">6.617110</span><span class="c2">192.168.1.152</span><span class="c3">94.156.177.109</span><span class="c4">HTTP</span><span class="c5">183</span><span class="c6">GET / HTTP/1.1</span></div>
<div class="r" style="top:210px"><span class="c0">126</span><span class="c1">6.812469</span><span class="c2">94.156.177.109</span><span class="c3">192.168.1.152</span><span class="c4">HTTP</span><span class="c5">916</span><span class="c6">HTTP/1.1 200 OK  (text/html)</span></div>
<div class="r" style="top:224px"><span class="c0">137</span><span class="c1">9.693148</span><span class="c2">192.168.1.152</span><span class="c3">94.156.177.109</span><span class="c4">HTTP</span><span class="c5">185</span><span class="c6">GET /sh HTTP/1.1</span></div>
<div class="r" style="top:238px"><span class="c0">140</span><span class="c1">9.893050</span><span class="c2">94.156.177.109</span><span class="c3">192.168.1.152</span><span class="c4">HTTP</span><span class="c5">515</span><span class="c6">HTTP/1.1 200 OK</span></div>
<div class="r" style="top:252px"><span class="c0">187</span><span class="c1">25.893477</span><span class="c2">192.168.1.152</span><span class="c3">94.156.177.109</span><span class="c4">HTTP</span><span class="c5">188</span><span class="c6">GET /clean HTTP/1.1</span></div>
<svg style="left:0;top:0" width="20" height="261" viewBox="0 0 20 261"><g fill="none" stroke-width="1"><path d="M2 7.5 H12.5" stroke="#fff"/><path d="M7.5 7.5 V14" stroke="#fff"/><path d="M7.5 14 V88" stroke="#878b8e"/><path d="M4 21.5 H14" stroke="#878b8e"/><path d="M7.5 90 V261" stroke="#878b8e" stroke-dasharray="4 2 6 2"/></g><path d="M15.2 7.5 L11.6 5.9 V9.1 Z" fill="#fff"/><path d="M1 21.5 L4.6 19.9 V23.1 Z" fill="#878b8e"/><circle cx="7.5" cy="35.5" r="2.4" fill="#878b8e"/></svg>

</div>
<div id="mini"><div class="abs" style="left:0;top:0;width:30px;height:5px;background:#308cc6"></div></div>
<div id="vsb">
<div class="abs" style="left:0;top:0;width:14px;height:14px;background:#f8f8f8;border-bottom:1px solid #c8c8c8"></div>
<div class="abs" style="left:0;top:14px;width:14px;height:64px;background:linear-gradient(90deg,#fdfdfd,#f0f0f0);border-bottom:1px solid #bcbcbc"></div>
<div class="abs" style="left:0;top:266px;width:14px;height:14px;background:#f8f8f8;border-top:1px solid #c8c8c8"></div>
<svg style="left:2px;top:4px" width="8" height="4" viewBox="0 0 8 4"><path d="M0 4 L4 0 L8 4 Z" fill="#4d4d4d"/></svg>
<svg style="left:2px;top:271px" width="8" height="4" viewBox="0 0 8 4"><path d="M0 0 L4 4 L8 0 Z" fill="#4d4d4d"/></svg>
</div>
</div>
<div id="dpane">
<div class="d" style="top:0px"><svg class="tri" width="6" height="8" viewBox="0 0 6 8"><path d="M1 0.3 L5 4 L1 7.7 Z" fill="#5c5c5c"/></svg><span>Frame 1: 282 bytes on wire (2256 bits), 282 bytes captured (2256 bits) on interface \Device\NPF_{3A4E2F1B-7C0D-4E55-9A1B-0F2C6D7E8A90}, id 0</span></div>
<div class="d" style="top:14px"><svg class="tri" width="6" height="8" viewBox="0 0 6 8"><path d="M1 0.3 L5 4 L1 7.7 Z" fill="#5c5c5c"/></svg><span>Ethernet II, Src: IntelCor_34:10:25 (00:bb:60:34:10:25), Dst: zte_9a:2e:bf (b0:0a:d5:9a:2e:bf)</span></div>
<div class="d" style="top:28px"><svg class="tri" width="6" height="8" viewBox="0 0 6 8"><path d="M1 0.3 L5 4 L1 7.7 Z" fill="#5c5c5c"/></svg><span>Internet Protocol Version 4, Src: 192.168.1.152, Dst: 192.124.249.22</span></div>
<div class="d" style="top:42px"><svg class="tri" width="6" height="8" viewBox="0 0 6 8"><path d="M1 0.3 L5 4 L1 7.7 Z" fill="#5c5c5c"/></svg><span>Transmission Control Protocol, Src Port: 65233, Dst Port: 80, Seq: 1, Ack: 1, Len: 228</span></div>
<div class="d dsel" style="top:56px"><svg class="tri" width="6" height="8" viewBox="0 0 6 8"><path d="M1 0.3 L5 4 L1 7.7 Z" fill="#5c5c5c"/></svg><span>Hypertext Transfer Protocol</span></div>
<div id="hsb">
<div class="abs" style="left:0;top:0;width:14px;height:13px;background:#f8f8f8;border-right:1px solid #c8c8c8"></div>
<div class="abs" style="left:14px;top:0;width:428px;height:13px;background:linear-gradient(#fdfdfd,#f0f0f0);border-right:1px solid #bcbcbc"></div>
<div class="abs" style="left:666px;top:0;width:13px;height:13px;background:#f8f8f8;border-left:1px solid #c8c8c8"></div>
<svg style="left:3px;top:2px" width="5" height="8" viewBox="0 0 5 8"><path d="M5 0 L0.5 4 L5 8 Z" fill="#4d4d4d"/></svg>
<svg style="left:670px;top:2px" width="5" height="8" viewBox="0 0 5 8"><path d="M0 0 L4.5 4 L0 8 Z" fill="#4d4d4d"/></svg>
</div>
</div>
<div id="hpane">
<div id="hgut"></div>
<div class="h" style="top:0px"><span class="ho">0000</span><span class="hb">b0 0a d5 9a 2e bf 00 bb  60 34 10 25 08 00 45 00</span><span class="ha"><i>·</i><i>·</i><i>·</i><i>·</i>.<i>·</i><i>·</i><i>·</i> `4<i>·</i>%<i>·</i><i>·</i>E<i>·</i></span></div>
<div class="h" style="top:14px"><span class="ho">0010</span><span class="hb">01 0c 34 21 40 00 80 06  49 f7 c0 a8 01 98 c0 7c</span><span class="ha"><i>·</i><i>·</i>4!@<i>·</i><i>·</i><i>·</i> I<i>·</i><i>·</i><i>·</i><i>·</i><i>·</i><i>·</i>|</span></div>
<div class="h" style="top:28px"><span class="ho">0020</span><span class="hb">f9 16 fe d1 00 50 84 db  6a 40 80 0e ae e3 50 18</span><span class="ha"><i>·</i><i>·</i><i>·</i><i>·</i><i>·</i>P<i>·</i><i>·</i> j@<i>·</i><i>·</i><i>·</i><i>·</i>P<i>·</i></span></div>
<div class="h" style="top:42px"><span class="ho">0030</span><span class="hb">00 ff 5e 71 00 00 47 45  54 20 2f 2f 4d 45 6f 77</span><span class="ha"><i>·</i><i>·</i>^q<i>·</i><i>·</i>GE T //MEow</span></div>
<div class="h" style="top:56px"><span class="ho">0040</span><span class="hb">53 44 42 47 4d 45 51 77  51 6a 41 4a 42 67 55 72</span><span class="ha">SDBGMEQw QjAJBgUr</span></div>
<div class="h" style="top:70px"><span class="ho">0050</span><span class="hb">44 67 4d 43 47 67 55 41  42 42 53 32 43 41 31 66</span><span class="ha">DgMCGgUA BBS2CA1f</span></div>
<div class="h" style="top:84px"><span class="ho">0060</span><span class="hb">62 47 74 32 36 78 50 6b  4f 4b 58 34 5a 67 75 6f</span><span class="ha">bGt26xPk OKX4Zguo</span></div>
<div class="h" style="top:98px"><span class="ho">0070</span><span class="hb">55 6a 4d 30 54 67 51 55  51 4d 4b 39 4a 34 37 4d</span><span class="ha">UjM0TgQU QMK9J47M</span></div>
<div class="h" style="top:112px"><span class="ho">0080</span><span class="hb">4e 49 4d 77 6f 6a 50 58  25 32 42 32 79 7a 38 4c</span><span class="ha">NIMwojPX %2B2yz8L</span></div>
<div class="h" style="top:126px"><span class="ho">0090</span><span class="hb">51 73 67 4d 34 43 43 51  43 35 64 76 6a 30 31 34</span><span class="ha">QsgM4CCQ C5dvj014</span></div>
<div class="h" style="top:140px"><span class="ho">00a0</span><span class="hb">72 7a 59 41 25 33 44 25  33 44 20 48 54 54 50 2f</span><span class="ha">rzYA%3D% 3D HTTP/</span></div>
<div class="h" style="top:154px"><span class="ho">00b0</span><span class="hb">31 2e 31 0d 0a 43 6f 6e  6e 65 63 74 69 6f 6e 3a</span><span class="ha">1.1<i>·</i><i>·</i>Con nection:</span></div>
<div class="h" style="top:168px"><span class="ho">00c0</span><span class="hb">20 4b 65 65 70 2d 41 6c  69 76 65 0d 0a 41 63 63</span><span class="ha"> Keep-Al ive<i>·</i><i>·</i>Acc</span></div>
<div class="h" style="top:182px"><span class="ho">00d0</span><span class="hb">65 70 74 3a 20 2a 2f 2a  0d 0a 55 73 65 72 2d 41</span><span class="ha">ept: */* <i>·</i><i>·</i>User-A</span></div>
<div class="h" style="top:196px"><span class="ho">00e0</span><span class="hb">67 65 6e 74 3a 20 4d 69  63 72 6f 73 6f 66 74 2d</span><span class="ha">gent: Mi crosoft-</span></div>
<div class="h" style="top:210px"><span class="ho">00f0</span><span class="hb">43 72 79 70 74 6f 41 50  49 2f 31 30 2e 30 0d 0a</span><span class="ha">CryptoAP I/10.0<i>·</i><i>·</i></span></div>
<div class="h" style="top:224px"><span class="ho">0100</span><span class="hb">48 6f 73 74 3a 20 6f 63  73 70 2e 67 6f 64 61 64</span><span class="ha">Host: oc sp.godad</span></div>
<div class="h" style="top:238px"><span class="ho">0110</span><span class="hb">64 79 2e 63 6f 6d 0d 0a  0d 0a</span><span class="ha">dy.com<i>·</i><i>·</i> <i>·</i><i>·</i></span></div>
</div>
<div id="status">
<span style="left:63px">Hypertext Transfer Protocol: Protocol</span>
<span style="left:900px">Packets: 2019 · Displayed: 48 (2.4%)</span>
<span style="left:1272px">Profile: Default</span>
<svg style="left:9px;top:3px" width="16" height="16" viewBox="0 0 16 16"><defs><radialGradient id="sr" cx="0.38" cy="0.28" r="0.8"><stop offset="0" stop-color="#ee9496"/><stop offset="0.6" stop-color="#e6686c"/><stop offset="1" stop-color="#e4565a"/></radialGradient></defs><circle cx="8" cy="7.900" r="6.600" fill="url(#sr)" stroke="#9a3a40" stroke-width="0.800"/></svg>
<svg style="left:33px;top:3px" width="16" height="16" viewBox="0 0 16 16"><rect x="0.700" y="1" width="10.800" height="13.600" fill="#f1f1ec" stroke="#cfcfc8" stroke-width="0.600"/><path d="M0.900 1.200 H8.800 L11.200 3.400 V4.800 H0.900 Z" fill="#2f9fdc"/><path d="M3 5 L4.600 2 L5.800 5 Z" fill="#f1f1ec"/><path d="M2.200 7 H6 M2.200 9.800 H5 M2.200 12.400 H9" stroke="#cdcdc6" stroke-width="0.900"/><path d="M13.200 1.400 L5.200 9.400" stroke="#33363a" stroke-width="2.300" stroke-linecap="round"/><path d="M5.800 8.200 L3.800 10.800 L6.800 9.600 Z" fill="#0a0a0a"/><path d="M13.600 0.900 L14.400 1.700" stroke="#8a8e88" stroke-width="1.600" stroke-linecap="round"/></svg>
<div class="abs" style="left:887px;top:4px;width:1px;height:14px;border-left:1px dotted #b0b0b0"></div>
<div class="abs" style="left:1259px;top:4px;width:1px;height:14px;border-left:1px dotted #b0b0b0"></div>

</div>
<div id="taskbar">
<div class="abs" style="left:99px;top:0;width:192px;height:34px;background:#0d1622;border-bottom:3px solid #4a8fdc"></div>
<span style="left:42.5px;color:#a9b3c1;font-size:14.8px">Menu</span>
<span style="left:126.5px;color:#e6eaf0;font-size:15.1px">network_capture.pcap...</span>
<svg style="left:0;top:0" width="1366" height="34" viewBox="0 0 1366 34">
<!-- menu grid -->
<g fill="#c6ccd6"><rect x="12" y="7" width="8.600" height="8.600"/><rect x="23.600" y="7" width="8.600" height="8.600"/><rect x="12" y="18.300" width="8.600" height="8.600"/><rect x="23.600" y="18.300" width="8.600" height="8.600"/></g>
<!-- wireshark fin small -->
<path d="M103 24.600 C103.600 17 108.400 10.600 119.600 9 C116.600 14 116.600 19.600 119.400 24.600 Z" fill="url(#pg5)"/>
<!-- right dark zone -->
<rect x="1308" y="0" width="58" height="34" fill="#0e1015"/>
<rect x="1337" y="0" width="1" height="34" fill="#12151b"/>
<!-- nic sleeping -->
<path d="M1221.300 8.400 L1223 7 H1225.100 V26.600 H1221.700 V9.800 H1221.300 Z" fill="#d2d8e2"/>
<path d="M1227.300 8 H1243.800 V24.600 H1242.400 V27 H1240 V24.600 H1238.200 V27 H1235.800 V24.600 H1234 V27 H1231.600 V24.600 H1229.800 V27 H1228.400 V24.600 H1227.300 Z" fill="#d2d8e2"/>
<text x="1227.800" y="22.400" font-family="Liberation Sans,sans-serif" font-weight="bold" font-size="14" fill="#111d2c" stroke="#111d2c" stroke-width="0.7">Z</text>
<text x="1237" y="16.600" font-family="Liberation Sans,sans-serif" font-weight="bold" font-size="9" fill="#111d2c" stroke="#111d2c" stroke-width="0.5">Z</text>
<!-- workspace 1 -->
<rect x="1251.500" y="1.500" width="27" height="30" fill="#131519" stroke="#585c64" stroke-width="1"/>
<circle cx="1265.200" cy="15.700" r="7.600" fill="#f4f4f2"/>
<path d="M1265.200 20.400 V15.200 M1265.200 17.800 L1261.400 16 L1261.400 12.600 M1265.200 16.400 L1268.600 14.800 L1268.600 11.800 M1263.200 11.400 L1265.200 14.600 L1266.600 11 M1259.800 14.600 L1261.400 15.800 M1270.400 14.200 L1268.600 14.800" fill="none" stroke="#3a7ad6" stroke-width="1.500" stroke-linecap="round"/>
<!-- workspace 2 active -->
<rect x="1280" y="0" width="28" height="34" fill="#86b3ea"/>
<rect x="1280" y="0" width="28" height="1" fill="#4472b4"/>
<rect x="1280" y="32.200" width="28" height="1.800" fill="#3b68aa"/>
<path d="M1286.200 23.600 C1287 16.400 1291.600 10.600 1301.200 8.800 C1298.800 13.800 1299 18.800 1301.200 23.600 Z" fill="url(#pg5)"/>
<rect x="1286" y="23.400" width="15.400" height="0.800" fill="#6a8ec4"/>
</svg>

</div>
<svg id="split" style="left:0;top:0" width="1366" height="768" viewBox="0 0 1366 768" fill="#bdbdbd"><rect x="676" y="428" width="1" height="1"/><rect x="679" y="428" width="1" height="1"/><rect x="682" y="428" width="1" height="1"/><rect x="685" y="428" width="1" height="1"/><rect x="688" y="428" width="1" height="1"/><rect x="691" y="428" width="1" height="1"/><rect x="683" y="565" width="1" height="1"/><rect x="683" y="568" width="1" height="1"/><rect x="683" y="571" width="1" height="1"/><rect x="683" y="574" width="1" height="1"/><rect x="683" y="577" width="1" height="1"/><rect x="683" y="580" width="1" height="1"/></svg>
<svg id="cursor" style="left:1180px;top:125px" width="22" height="28" viewBox="1180 125 22 28"><path d="M1184.600 129.200 L1184.600 146.200 L1189.600 146.200 L1192.900 149.700 L1193.800 144.900 L1196.700 141.500 Z" fill="#4a4a4a" stroke="#ffffff" stroke-width="0.900" stroke-linejoin="round"/></svg>
</div></body></html>
